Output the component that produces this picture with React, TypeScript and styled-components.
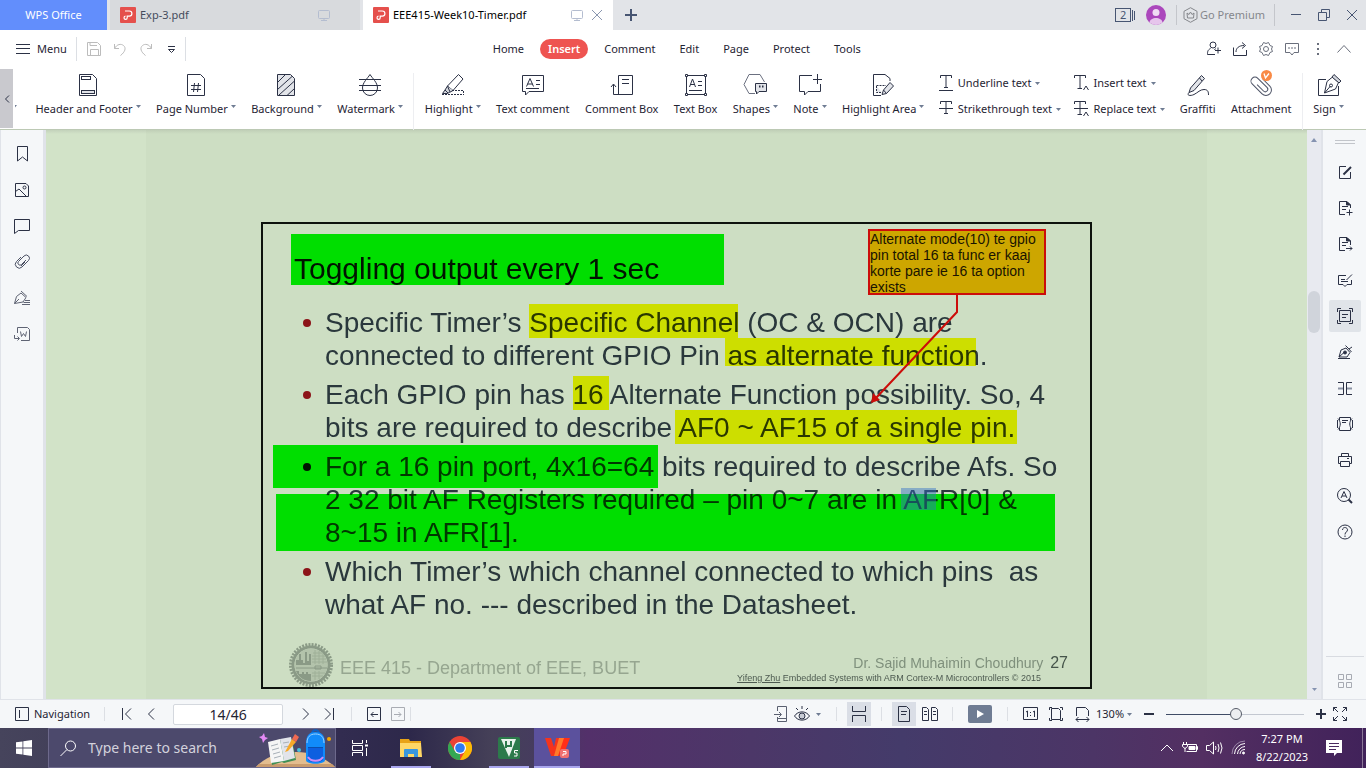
import React from "react";
import styled, { createGlobalStyle } from "styled-components";

const ink = "#2b3145";
const uiFont = `"Noto Sans", "Open Sans", sans-serif`;
const docFont = `"Liberation Sans", Arial, sans-serif`;

const Global = createGlobalStyle`
  *, *::before, *::after { box-sizing: border-box; }
  html, body, #root { height: 100%; }
  body { margin: 0; font: 11px/16px ${uiFont}; color: #1f2433; background: #fff; overflow: hidden; }
  button, input, select { font: inherit; color: inherit; }
  svg { display: block; flex: none; }
`;

const Shell = styled.div`
  display: flex;
  flex-direction: column;
  height: 100vh;
  min-width: 1340px;
`;

const BareButton = styled.button`
  display: flex;
  align-items: center;
  justify-content: center;
  flex: none;
  margin: 0;
  padding: 0;
  border: 0;
  background: none;
`;

const Spacer = styled.div`
  flex: 1;
`;

const Rule = styled.span<{ $h?: number; $m?: string; $c?: string }>`
  flex: none;
  width: 1px;
  height: ${(p) => p.$h ?? 14}px;
  margin: ${(p) => p.$m ?? "0"};
  background: ${(p) => p.$c ?? "#dcdfe4"};
`;

/* ---------- icons ---------- */

type IconProps = {
  w?: number;
  h?: number;
  c?: string;
  sw?: number;
  children: React.ReactNode;
};
const Icon = ({ w = 16, h = 16, c = ink, sw = 1, children }: IconProps) => (
  <svg width={w} height={h} viewBox={`0 0 ${w} ${h}`} fill="none" stroke={c} strokeWidth={sw} aria-hidden="true">
    {children}
  </svg>
);

const Caret = ({ c = "#6f7c93" }: { c?: string }) => (
  <svg width="5" height="3" viewBox="0 0 5 3" aria-hidden="true">
    <path d="M0 0H5L2.500 3Z" fill={c} />
  </svg>
);

const PdfBadge = () => (
  <svg width="16" height="16" viewBox="0 0 16 16" aria-hidden="true">
    <rect width="16" height="16" rx="1" fill="#e5504c" />
    <path d="M5 4H9.300A2.600 2.600 0 0 1 9.300 9.200H7.200V10.800A1.600 1.600 0 1 1 5.500 9.200" fill="none" stroke="#fff" strokeWidth="1.200" />
  </svg>
);

const Monitor = () => (
  <Icon w={12} h={12} c="#b4bdd0">
    <rect x=".5" y="1.500" width="11" height="8" rx="1" />
    <path d="M6 9.500V11.500M3 11.500H9" />
  </Icon>
);

const sheet = "M3.500 1.500H16.500L20.500 5.500V22.500H3.500Z";

const ribbonIcons: Record<string, React.ReactNode> = {
  header: (
    <>
      <path d={sheet} />
      <rect x="5.500" y="3.500" width="9" height="3" />
      <rect x="5.500" y="17.500" width="13" height="3" fill="#e2e4e9" />
    </>
  ),
  number: (
    <>
      <path d={sheet} />
      <path d="M7 12.500H17M7 16.500H17M10.500 10L9.500 19M14.500 10L13.500 19" />
    </>
  ),
  background: (
    <>
      <path d={sheet} fill="#e2e4e9" />
      <path d="M3.500 9.500L11.500 1.500M3.500 16.500L18 3.500M5 22L20.500 8M13 22.500L20.500 15.500" />
    </>
  ),
  watermark: (
    <>
      <path d="M12 1.500C9.500 5.500 4.500 9.500 4.500 15A7.500 7.500 0 0 0 19.500 15C19.500 9.500 14.500 5.500 12 1.500Z" />
      <path d="M1 6.500H23M1 12.500H23M1 17.500H23" />
    </>
  ),
  highlight: (
    <>
      <path d="M17.500 1.500L22 6L12 17.500L6.500 13Z" />
      <path d="M6.500 13L4 17L1.500 20.500H6L8.500 19.500L12 17.500M4 17L7 20M6.500 13L9 19" fill="#d4d7de" />
      <path d="M11 17.500H23M22.500 18V22M1 21.500H23" strokeDasharray="2 1" />
    </>
  ),
  textComment: (
    <>
      <path d="M1.500 2.500H22.500V18.500H8L4.500 22V18.500H1.500Z" />
      <path d="M5.500 13.500L9 5.500L12.500 13.500M6.500 11H11.500M15 7.500H19M15 11.500H19M5 15.500H18" />
    </>
  ),
  commentBox: (
    <>
      <path d="M8.500 21.500V2.500H22.500V21.500H3.500V11.500M1 14L3.500 11L6 14M12 6.500H19M12 10.500H19" />
    </>
  ),
  textBox: (
    <>
      <path d="M2.500 4V20M21.500 4V20M4 2.500H20M4 21.500H20" />
      <path d="M1.500 1.500H3.500V3.500H1.500ZM20.500 1.500H22.500V3.500H20.500ZM1.500 20.500H3.500V22.500H1.500ZM20.500 20.500H22.500V22.500H20.500Z" />
      <path d="M5.500 14L8.500 6L11.500 14M6.500 11.500H10.500M14 8.500H18M14 12.500H18M5 17.500H18" />
    </>
  ),
  shapes: (
    <>
      <path d="M12 20.500H6L1 11.500L6 1.500H17L21.500 9" stroke="#6b7080" />
      <path d="M12.500 10.500H23.500V18.500H16L13.500 21V18.500H12.500Z" fill="#e2e4e9" />
      <path d="M16 13.500H17.500M19 13.500H20.500" strokeWidth="2" />
    </>
  ),
  note: (
    <path d="M14 2.500H1.500V18.500H6.500V22L10 18.500H22.500V11M19.500 1V11M15 6.500H24" />
  ),
  highlightArea: (
    <>
      <path d="M10 22.500H2.500V1.500H14L19 5.500V8" />
      <path d="M5.500 12.500H15M5.500 13V19.500H11" strokeDasharray="2 1" fill="#e2e4e9" />
      <path d="M19 9.500L22.500 13L15.500 20.500L11 21.500L12.500 17ZM12.500 17L15.500 20.500" fill="#e2e4e9" />
    </>
  ),
  graffiti: (
    <>
      <path d="M15.500 2.500L18.500 5.500L8 17.500L3 19.500L4.500 15ZM13.500 5L16 8" fill="#e2e4e9" />
      <path d="M3 19.500C0 23 5 23 8 21.500C12 19.500 14 16.500 18 16.500C22 16.500 22.500 19 22.500 22" />
    </>
  ),
  attachment: (
    <path
      d="M17.500 8V18A5.500 5.500 0 0 1 6.500 18V4A4 4 0 0 1 14.500 4V17A2.500 2.500 0 0 1 9.500 17V8"
      transform="rotate(-45 12 12) translate(0 1)"
      stroke="#4c5265"
    />
  ),
  sign: (
    <>
      <path d="M9 6.500H1.500V22.500H21.500V13" />
      <path d="M15.500 4L21.500 9.500L18.500 16L7.500 20L10 8.500ZM7.500 20L13.500 13" />
      <path d="M17 1.500L24 8L22 10L15 4Z" fill="#d4d7de" />
      <circle cx="14" cy="12.500" r="1.500" />
    </>
  ),
};

/* ---------- title bar ---------- */

const TitleBar = styled.header`
  display: flex;
  align-items: center;
  flex: none;
  height: 30px;
  background: #e2e4e8;
`;
const HomeTab = styled(BareButton)`
  width: 107px;
  height: 30px;
  margin-right: 3px;
  background: #628efc;
  color: #fff;
`;
const DocTab = styled.div<{ $active?: boolean }>`
  display: flex;
  align-items: center;
  width: 250px;
  height: 30px;
  margin-right: ${(p) => (p.$active ? 0 : 3)}px;
  padding: 0 10px;
  gap: 4px;
  background: ${(p) => (p.$active ? "#fff" : "#d8dadd")};
  color: ${(p) => (p.$active ? "#000" : "#444b5c")};
`;
const TabClose = styled(BareButton)`
  margin-left: 8px;
`;
const TabExtra = styled.span<{ $pad: number }>`
  display: flex;
  align-items: center;
  margin-left: auto;
  padding-right: ${(p) => p.$pad}px;
`;
const NewTab = styled(BareButton)`
  width: 36px;
  height: 30px;
`;
const Premium = styled(BareButton)`
  gap: 2px;
  margin-left: 6px;
  color: #85878c;
`;
const WindowButton = styled(BareButton)`
  width: 28px;
  height: 30px;
`;
const TabCount = styled(BareButton)`
  margin-right: 10px;
  color: #475572;
`;
const CountBox = styled.span`
  width: 16px;
  height: 14px;
  margin-right: 1px;
  border: 1px solid #475572;
  line-height: 12px;
  text-align: center;
`;

/* ---------- menu ---------- */

const MenuBar = styled.nav`
  display: flex;
  align-items: center;
  flex: none;
  height: 38px;
  padding: 0 14px 0 16px;
`;
const MenuButton = styled(BareButton)`
  gap: 7px;
  margin-right: 9px;
`;
const QuickTools = styled.div`
  display: flex;
  align-items: center;
  gap: 10px;
  margin: 0 5px 0 9px;
`;
const MenuTabs = styled.div`
  display: flex;
  align-items: center;
  margin-left: 295px;
`;
const MenuTab = styled(BareButton)<{ $active?: boolean }>`
  height: 20px;
  padding: 0 ${(p) => (p.$active ? 8 : 12)}px;
  margin: 0 ${(p) => (p.$active ? 4 : 0)}px;
  border-radius: 10px;
  background: ${(p) => (p.$active ? "#ee5451" : "none")};
  color: ${(p) => (p.$active ? "#fff" : "inherit")};
  font-weight: ${(p) => (p.$active ? 600 : 400)};
`;
const MenuActions = styled.div`
  display: flex;
  align-items: center;
  gap: 10px;
`;

/* ---------- ribbon ---------- */

const Ribbon = styled.section`
  display: flex;
  flex: none;
  height: 62px;
  border-bottom: 1px solid #bcc9b4;
`;
const RibbonScroll = styled(BareButton)`
  width: 13px;
  height: 59px;
  margin-top: 1px;
  background: #c9c9ce;
`;
const RibbonBody = styled.div`
  display: flex;
  align-items: flex-start;
  flex: 1;
  justify-content: space-between;
  padding: 5px 22px 0 2px;
`;
const RibbonClip = styled.span`
  display: flex;
  justify-content: flex-end;
  width: 2px;
  margin: 32px 3px 0 0;
  overflow: hidden;
`;
const RibbonRule = styled(Rule)`
  height: 57px;
  margin: 0 -5px;
  background: #edeef1;
`;
const RibbonItem = styled(BareButton)`
  position: relative;
  flex-direction: column;
  gap: 4px;
`;
const RibbonLabel = styled.span`
  display: flex;
  gap: 3px;
  white-space: nowrap;
  svg { margin-top: 4px; }
`;
const RibbonStack = styled.div`
  display: flex;
  flex-direction: column;
  gap: 10px;
  margin: 0 -1px;
  padding-top: 2px;
`;
const RibbonRow = styled(BareButton)`
  justify-content: flex-start;
  gap: 4px;
  height: 16px;
  white-space: nowrap;
`;
const VipDot = styled.span`
  position: absolute;
  top: -3px;
  left: 50%;
  width: 11px;
  height: 11px;
  border-radius: 50%;
  background: #f98a45;
`;

type Tool = { id: string; label: string; menu?: boolean; vip?: boolean };
const RibbonTool = ({ id, label, menu, vip }: Tool) => (
  <RibbonItem type="button">
    <Icon w={24} h={24}>{ribbonIcons[id]}</Icon>
    {vip && (
      <VipDot>
        <svg width="11" height="11" viewBox="0 0 11 11" fill="none" stroke="#fff" strokeWidth="1.300">
          <path d="M3 3.500L4.500 8L8 3.500" />
        </svg>
      </VipDot>
    )}
    <RibbonLabel>
      {label}
      {menu && <Caret />}
    </RibbonLabel>
  </RibbonItem>
);

const TextMark = ({ strike, caret }: { strike?: boolean; caret?: boolean }) => (
  <Icon w={15} h={16}>
    <path d={caret ? "M.5 3V.5H11.500V3M6 .5V13.500M3.500 13.500H8" : "M1.500 3V.5H12.500V3M7 .5V12.500M5 12.500H9"} />
    {!strike && !caret && <path d="M0 15.500H14" />}
    {strike && <path d="M0 7.500H14" />}
    {caret && <path d="M9.500 15L12 11L14.500 15" />}
  </Icon>
);

/* ---------- workspace ---------- */

const Workspace = styled.main`
  display: flex;
  flex: 1;
  min-height: 0;
`;
const SideRail = styled.aside`
  display: flex;
  flex-direction: column;
  align-items: center;
  flex: none;
  width: 46px;
  padding: 14px 1px 0 0;
  gap: 16px;
  background: #f5f7f9;
  border-left: 1px solid #e0e3e9;
  border-right: 3px solid #e0e3e9;
`;
const RailButton = styled(BareButton)<{ $on?: boolean }>`
  width: 32px;
  height: ${(p) => (p.$on ? 32 : 20)}px;
  margin: ${(p) => (p.$on ? "-6px 0" : "0")};
  border-radius: 2px;
  background: ${(p) => (p.$on ? "#e0e4e9" : "none")};
`;
const RightRail = styled(SideRail)`
  width: 45px;
  padding: 10px 0 8px;
  border-left: 2px solid #e0e3e9;
  border-right: 0;
`;
const Grip = styled.span`
  width: 20px;
  height: 4px;
  margin-bottom: 2px;
  border-top: 1px solid #c2c5ca;
  border-bottom: 1px solid #c2c5ca;
`;
const RailFoot = styled.div`
  display: flex;
  justify-content: center;
  width: 38px;
  margin-top: auto;
  padding-top: 14px;
  border-top: 1px solid #d8dbe1;
`;
const DocView = styled.section`
  flex: 1;
  min-width: 0;
  overflow: hidden;
  padding: 0 100px;
  background: linear-gradient(#c3d2bb, #d2e3c8 4px);
`;
const Sheet = styled.article`
  display: flex;
  flex-direction: column;
  align-items: center;
  min-height: 100%;
  padding-top: 92px;
  background: linear-gradient(#c0cfb7, #cddec3 4px);
`;
const ScrollTrack = styled.div`
  display: flex;
  flex-direction: column;
  align-items: center;
  flex: none;
  width: 14px;
  padding: 8px 0;
  background: #e8eaf0;
`;
const ScrollThumb = styled.span`
  width: 12px;
  height: 42px;
  margin-top: 149px;
  border-radius: 6px;
  background: #d0d4db;
`;

/* ---------- slide ---------- */

const Slide = styled.div`
  position: relative;
  isolation: isolate;
  width: 831px;
  padding: 28px 22px 0 31px;
  border: 2px solid #0d120d;
  background: #cddec3;
  font-family: ${docFont};
  color: #2a383c;
`;
const SlideTitle = styled.h1`
  margin: 0 0 20px;
  font-size: 30px;
  line-height: 34px;
  font-weight: 400;
  color: #8c1418;
`;
const Bullets = styled.ul`
  display: flex;
  flex-direction: column;
  gap: 6px;
  margin: 0;
  padding: 0 0 0 31px;
  list-style: none;
  font-size: 28px;
  line-height: 33px;
  white-space: pre;
`;
const Bullet = styled.li`
  position: relative;
  &::before {
    content: "";
    position: absolute;
    left: -22px;
    top: 13px;
    width: 8px;
    height: 8px;
    border-radius: 50%;
    background: #8c1418;
  }
`;
const SlideFoot = styled.footer`
  display: flex;
  align-items: center;
  margin: 22px 0 0 -5px;
  color: #96a690;
  font-size: 18px;
  line-height: 22px;
  gap: 7px;
`;
const Course = styled.span`
  padding-top: 6px;
`;
const Credits = styled.div`
  display: flex;
  flex-direction: column;
  align-items: flex-end;
  margin-left: auto;
  padding-top: 8px;
  font-size: 14px;
  line-height: 18px;
  color: #7f907c;
`;
const Author = styled.span`
  display: flex;
  gap: 7px;
`;
const PageNo = styled.span`
  font-size: 16px;
  color: #45544a;
`;
const Source = styled.small`
  padding-right: 27px;
  font-size: 9px;
  line-height: 13px;
  color: #4d5a50;
`;
const Highlight = styled.span<{ $x: number; $y: number; $w: number; $h: number; $c: string }>`
  position: absolute;
  left: ${(p) => p.$x}px;
  top: ${(p) => p.$y}px;
  width: ${(p) => p.$w}px;
  height: ${(p) => p.$h}px;
  background: ${(p) => p.$c};
  mix-blend-mode: multiply;
`;
const Selection = styled(Highlight)`
  mix-blend-mode: normal;
`;
const Callout = styled.div`
  position: absolute;
  top: 5px;
  left: 605px;
  width: 178px;
  height: 66px;
  border: 2px solid #cc0d0a;
  background: #cda600;
  color: #1a1400;
  font-size: 14px;
  line-height: 16px;
  white-space: pre;
`;
const Leader = styled.svg`
  position: absolute;
  left: 600px;
  top: 70px;
`;

const green = "#00ff00";
const yellow = "#ffff00";
const marks = [
  { $x: 28, $y: 10, $w: 433, $h: 51, $c: green },
  { $x: 10, $y: 221, $w: 385, $h: 43, $c: green },
  { $x: 13, $y: 270, $w: 779, $h: 57, $c: green },
  { $x: 266, $y: 80, $w: 209, $h: 34, $c: yellow },
  { $x: 462, $y: 114, $w: 251, $h: 28, $c: yellow },
  { $x: 310, $y: 152, $w: 36, $h: 34, $c: yellow },
  { $x: 412, $y: 186, $w: 342, $h: 34, $c: yellow },
];

const bullets = [
  "Specific Timer’s Specific Channel (OC & OCN) are\nconnected to different GPIO Pin as alternate function.",
  "Each GPIO pin has 16 Alternate Function possibility. So, 4\nbits are required to describe AF0 ~ AF15 of a single pin.",
  "For a 16 pin port, 4x16=64 bits required to describe Afs. So\n2 32 bit AF Registers required – pin 0~7 are in AFR[0] &\n8~15 in AFR[1].",
  "Which Timer’s which channel connected to which pins  as\nwhat AF no. --- described in the Datasheet.",
];

const Seal = () => (
  <svg width="44" height="44" viewBox="0 0 44 44" fill="none" aria-hidden="true">
    <circle cx="22" cy="22" r="20.500" stroke="#8a9a86" strokeWidth="3" strokeDasharray="2 1.220" />
    <circle cx="22" cy="22" r="18" stroke="#8a9a86" strokeWidth="3" />
    <circle cx="22" cy="22" r="16.500" fill="#b3c3ab" />
    <path d="M7 21V17H10V11H12V17H14V20H16V9H18V18H20V11H22V22H7Z" fill="#8a9a86" />
    <path d="M7 28H10V31H13V29H15V31H17V29H19V31H22V38C15 38 9 34 7 28Z" fill="#8a9a86" />
    <path d="M24 10H34M23 13H36M23 16H37M23 19H38M23 30H36M23 33H34M26 7V21M30 8V21M34 11V21M26 28V37M30 28V36" stroke="#9fb098" />
    <path d="M7 25H38M26 23H32V26H26Z" stroke="#8a9a86" />
  </svg>
);

/* ---------- status bar ---------- */

const StatusBar = styled.footer`
  display: flex;
  align-items: center;
  flex: none;
  height: 29px;
  padding: 0 14px 0 15px;
  background: #f5f7f9;
  border-top: 1px solid #e0e3e9;
`;
const NavToggle = styled(BareButton)`
  gap: 5px;
`;
const PageInput = styled.input`
  width: 110px;
  height: 21px;
  margin: 0 18px 0 10px;
  padding: 0;
  border: 1px solid #d4d8de;
  border-radius: 2px;
  background: #fff;
  font-size: 14px;
  text-align: center;
`;
const StatusButton = styled(BareButton)<{ $on?: boolean; $w?: number }>`
  width: ${(p) => p.$w ?? 24}px;
  height: 24px;
  background: ${(p) => (p.$on ? "#dadee6" : "none")};
`;
const PlayButton = styled(BareButton)`
  width: 24px;
  height: 18px;
  border-radius: 2px;
  background: #6f7c93;
`;
const ZoomSelect = styled.select`
  width: 31px;
  margin: 0 0 0 2px;
  padding: 0;
  border: 0;
  background: none;
  appearance: none;
`;
const ZoomRange = styled.input`
  width: 138px;
  height: 14px;
  margin: 0 10px 0 0;
  appearance: none;
  background: none;
  &::-webkit-slider-runnable-track {
    height: 1px;
    background: linear-gradient(90deg, #3f4c66 51%, #c3c8d1 51%);
  }
  &::-webkit-slider-thumb {
    appearance: none;
    width: 12px;
    height: 12px;
    margin-top: -6px;
    border: 1px solid #555b68;
    border-radius: 50%;
    background: #eceef1;
  }
`;

/* ---------- taskbar ---------- */

const Taskbar = styled.footer`
  display: flex;
  align-items: center;
  flex: none;
  height: 40px;
  background: linear-gradient(90deg, #46445c 0, #322c50 25%, #2d284a 30%, #454058 36%, #463b60 40%, #53306a 43%, #4c3768 55%, #443b6a 66%, #4c3566 80%, #532f62 88%, #41225a 100%);
  color: #fff;
`;
const TaskButton = styled(BareButton)<{ $w?: number; $gap?: number; $state?: "open" | "active" }>`
  width: ${(p) => p.$w ?? 40}px;
  height: 40px;
  margin-right: ${(p) => p.$gap ?? 0}px;
  background: ${(p) => (p.$state === "active" ? "#5b519d" : "none")};
  border-bottom: ${(p) => (p.$state ? "2px solid #a9a6ee" : "0")};
  padding-top: ${(p) => (p.$state ? 2 : 0)}px;
`;
const SearchBox = styled.label`
  display: flex;
  align-items: center;
  flex: none;
  width: 288px;
  height: 40px;
  padding-left: 11px;
  gap: 11px;
  border: 1px solid #6d698c;
  background: #4c496c;
`;
const SearchInput = styled.input`
  flex: 1;
  min-width: 0;
  padding: 0;
  border: 0;
  background: none;
  font-size: 14px;
  &::placeholder { color: #d3d2dc; }
`;
const Tray = styled.div`
  display: flex;
  align-items: center;
  gap: 8px;
  padding-right: 3px;
`;
const Clock = styled.time`
  width: 54px;
  margin-right: 9px;
  line-height: 18px;
  text-align: center;
`;
const Corner = styled.span`
  width: 1px;
  height: 40px;
  margin-left: 12px;
  background: #8a7796;
`;

const SearchArt = () => (
  <svg width="79" height="38" viewBox="0 0 79 38" aria-hidden="true">
    <path d="M0 38C10 27 24 23 40 23S68 28 79 38Z" fill="#e3bd8e" />
    <path d="M0 38L3 35H76L79 38Z" fill="#c99b6c" />
    <path d="M13 15L24 12L27 13L36 10L40 31L28 34L26 33L16 36Z" fill="#3f8f55" />
    <path d="M12 13L24 10L28 32L15 34Z" fill="#f5f5f5" />
    <path d="M24 10L35 8L39 29L28 32Z" fill="#e2e4ea" />
    <path d="M15 17L22 15M16 21L23 19M17 25L24 23M18 29L25 27M27 14L33 13M28 18L34 17" stroke="#a8b0b8" fill="none" />
    <path d="M29 23L36 10L40 13L32 22Z" fill="#f7a928" />
    <path d="M36 10L39 5L43 8L40 13Z" fill="#ef6a52" />
    <path d="M8 4L9 8L12 9L9 11L7 14L6 10L3 8L6 7Z" fill="#e48af5" />
    <circle cx="43" cy="21" r="2" fill="#43c4e0" />
    <circle cx="73" cy="10" r="2" fill="#f5a800" />
    <path d="M56 5C56 0 63 0 63 5" stroke="#0b5fc4" fill="none" strokeWidth="2" />
    <path d="M50 14C50 6 54 3 59.500 3S69 6 69 14V31C69 36 50 36 50 31Z" fill="#118bfa" />
    <path d="M51 14C51 8 54 5 59.500 5S68 8 68 14" stroke="#9ad3ff" fill="none" strokeWidth="1" />
    <path d="M52 19H67V31C65 34 54 34 52 31Z" fill="#0d5fe0" />
    <path d="M52 28C55 33 64 33 67 28" stroke="#d08cf5" fill="none" strokeWidth="2" />
    <path d="M52 18.500H67" stroke="#0a4fb0" />
  </svg>
);

export default function App() {
  const ribbonA: Tool[] = [
    { id: "header", label: "Header and Footer", menu: true },
    { id: "number", label: "Page Number", menu: true },
    { id: "background", label: "Background", menu: true },
    { id: "watermark", label: "Watermark", menu: true },
  ];
  const ribbonB: Tool[] = [
    { id: "highlight", label: "Highlight", menu: true },
    { id: "textComment", label: "Text comment" },
    { id: "commentBox", label: "Comment Box" },
    { id: "textBox", label: "Text Box" },
    { id: "shapes", label: "Shapes", menu: true },
    { id: "note", label: "Note", menu: true },
    { id: "highlightArea", label: "Highlight Area", menu: true },
  ];

  return (
    <Shell>
      <Global />
      <TitleBar>
        <HomeTab type="button">WPS Office</HomeTab>
        <DocTab>
          <PdfBadge />
          Exp-3.pdf
          <TabExtra $pad={20}>
            <Monitor />
          </TabExtra>
        </DocTab>
        <DocTab $active>
          <PdfBadge />
          EEE415-Week10-Timer.pdf
          <TabExtra $pad={0}>
            <Monitor />
            <TabClose type="button" aria-label="Close tab">
              <Icon w={12} h={12} c="#8a97b0">
                <path d="M1 1L11 11M11 1L1 11" />
              </Icon>
            </TabClose>
          </TabExtra>
        </DocTab>
        <NewTab type="button" aria-label="New tab">
          <Icon w={12} h={12} c="#475572" sw={2}>
            <path d="M6 0V12M0 6H12" />
          </Icon>
        </NewTab>
        <Spacer />
        <TabCount type="button">
          <CountBox>2</CountBox>
          <Icon w={4} h={14} c="#475572">
            <path d="M.5 2V13M2.500 3V12" />
          </Icon>
        </TabCount>
        <BareButton type="button" aria-label="Account">
          <svg width="20" height="20" viewBox="0 0 20 20">
            <circle cx="10" cy="10" r="10" fill="#ab47bc" />
            <circle cx="10" cy="7.500" r="3.500" fill="#f0dcf4" />
            <path d="M3.500 17.500C4 11.500 16 11.500 16.500 17.500A10 10 0 0 1 3.500 17.500Z" fill="#e6c5ec" />
          </svg>
        </BareButton>
        <Rule $h={20} $m="0 0 0 10px" $c="#c4c6cb" />
        <Premium type="button">
          <Icon w={15} h={16} c="#85878c">
            <path d="M7.500 .7L14 4.300V11.700L7.500 15.300L1 11.700V4.300Z" />
            <path d="M4 6L6 7.500L7.500 5L9 7.500L11 6L10.500 11H4.500Z" />
          </Icon>
          Go Premium
        </Premium>
        <Rule $h={22} $m="0 7px 0 9px" $c="#c4c6cb" />
        <WindowButton type="button" aria-label="Minimize">
          <Icon w={12} h={12} c="#475572"><path d="M1 5.500H11" /></Icon>
        </WindowButton>
        <WindowButton type="button" aria-label="Restore">
          <Icon w={12} h={12} c="#475572"><path d="M.5 3.500H8.500V11.500H.5ZM3.500 3V.5H11.500V8.500H9" /></Icon>
        </WindowButton>
        <WindowButton type="button" aria-label="Close">
          <Icon w={12} h={12} c="#475572"><path d="M1 1L11 11M11 1L1 11" /></Icon>
        </WindowButton>
      </TitleBar>

      <MenuBar>
        <MenuButton type="button">
          <Icon w={14} h={10}><path d="M0 .5H14M0 4.500H14M0 9.500H14" /></Icon>
          Menu
        </MenuButton>
        <Rule $h={24} />
        <QuickTools>
          <BareButton type="button" aria-label="Save">
            <Icon c="#bcbcbc"><path d="M1.500 1.500H11.500L14.500 4.500V14.500H1.500ZM4 1.500V4.500H11M4.500 14V8.500H12.500V14" /></Icon>
          </BareButton>
          <BareButton type="button" aria-label="Undo">
            <Icon c="#bcbcbc"><path d="M2.500 3V7.500H7M2.500 7.500C5 3 9 2.500 11.500 4.500C14.500 7 13 11 8.500 14.500" /></Icon>
          </BareButton>
          <BareButton type="button" aria-label="Redo">
            <Icon c="#bcbcbc"><path d="M13.500 3V7.500H9M13.500 7.500C11 3 7 2.500 4.500 4.500C1.500 7 3 11 7.500 14.500" /></Icon>
          </BareButton>
          <BareButton type="button" aria-label="Customize quick access">
            <Icon><path d="M4 5.500H11M4.500 8.500H10.500L7.500 11.500Z" /></Icon>
          </BareButton>
        </QuickTools>
        <Rule $h={24} />
        <MenuTabs>
          {["Home", "Insert", "Comment", "Edit", "Page", "Protect", "Tools"].map((t) => (
            <MenuTab type="button" key={t} $active={t === "Insert"}>{t}</MenuTab>
          ))}
        </MenuTabs>
        <Spacer />
        <MenuActions>
          <BareButton type="button" aria-label="Share with">
            <Icon><circle cx="7" cy="4" r="3" /><path d="M4.500 7.500C1.500 9 1.500 11 1.500 13.500H9M9.500 7.500L8.500 9M12 6.500V12.500M9 9.500H15" /></Icon>
          </BareButton>
          <BareButton type="button" aria-label="Export">
            <Icon><path d="M1.500 6.500V14.500H14.500V9M4 11C4 7 7 4.500 12 4.500M10 1.500L13.500 4.500L10 7.500" /></Icon>
          </BareButton>
          <BareButton type="button" aria-label="Settings">
            <Icon c="#6a6f7c"><path d="M5.500 1.500L8 2.500L10.500 1.500L12 4.500L14.500 5.500L13.500 8L14.500 10.500L12 11.500L10.500 14.500L8 13.500L5.500 14.500L4 11.500L1.500 10.500L2.500 8L1.500 5.500L4 4.500Z" /><circle cx="8" cy="8" r="2.500" /></Icon>
          </BareButton>
          <BareButton type="button" aria-label="Feedback">
            <Icon c="#6a6f7c"><path d="M1.500 2.500H14.500V11.500H10L8 14L6 11.500H1.500ZM4 7H6M7 7H9M10 7H12" /></Icon>
          </BareButton>
          <BareButton type="button" aria-label="More">
            <Icon c="#6a6f7c" sw={2}><path d="M8 2V4M8 7V9M8 12V14" /></Icon>
          </BareButton>
          <BareButton type="button" aria-label="Collapse ribbon">
            <Icon c="#6a6f7c"><path d="M1.500 11.500L8 4.500L14.500 11.500" /></Icon>
          </BareButton>
        </MenuActions>
      </MenuBar>

      <Ribbon>
        <RibbonScroll type="button" aria-label="Scroll left">
          <Icon w={6} h={8}><path d="M5 .5L1.500 4L5 7.500" /></Icon>
        </RibbonScroll>
        <RibbonBody>
          <RibbonClip><Caret /></RibbonClip>
          {ribbonA.map((t) => <RibbonTool key={t.id} {...t} />)}
          <RibbonRule />
          {ribbonB.map((t) => <RibbonTool key={t.id} {...t} />)}
          <RibbonStack>
            <RibbonRow type="button"><TextMark />Underline text <Caret /></RibbonRow>
            <RibbonRow type="button"><TextMark strike />Strikethrough text <Caret /></RibbonRow>
          </RibbonStack>
          <RibbonStack>
            <RibbonRow type="button"><TextMark caret />Insert text <Caret /></RibbonRow>
            <RibbonRow type="button"><TextMark caret strike />Replace text <Caret /></RibbonRow>
          </RibbonStack>
          <RibbonTool id="graffiti" label="Graffiti" />
          <RibbonTool id="attachment" label="Attachment" vip />
          <RibbonRule />
          <RibbonTool id="sign" label="Sign" menu />
        </RibbonBody>
      </Ribbon>

      <Workspace>
        <SideRail>
          <RailButton type="button" aria-label="Bookmarks"><Icon><path d="M3.500 .5H13.500V15L8.500 11L3.500 15Z" /></Icon></RailButton>
          <RailButton type="button" aria-label="Thumbnails"><Icon><path d="M1.500 1.500H12L14.500 4V14.500H1.500ZM1.500 9.500L5 7L12 14" /><circle cx="10.500" cy="5.500" r="1.500" /></Icon></RailButton>
          <RailButton type="button" aria-label="Comments"><Icon><path d="M.5 1.500H15.500V12.500H4.500L.5 15.500Z" /></Icon></RailButton>
          <RailButton type="button" aria-label="Attachments">
            <Icon c="#4c5265"><path d="M7 3L2.500 7.500A3.800 3.800 0 0 0 8 13L14.500 6.500A3 3 0 0 0 10 2L4.500 7.500A2 2 0 0 0 7.500 10.500L12 6M7 12L11 8" /></Icon>
          </RailButton>
          <RailButton type="button" aria-label="Signatures">
            <Icon c="#5f6474"><path d="M.5 13.500L2.500 6.500L7 3L12 7.500L9 12L.5 13.500ZM7 1L13 6.500M.5 13.500L5 9M11 10.500H16M9.500 12.500H16M8 14.500H16" /></Icon>
          </RailButton>
          <RailButton type="button" aria-label="Convert to Word">
            <Icon c="#5f6474"><path d="M3.500 7V1.500H13.500L15.500 3.500V14.500H7M6.500 5.500L7.500 10.500L9.500 7.500L11.500 10.500L12.500 5.500M.5 9V12.500H5M3.500 10.500L5.500 12.500L3.500 14.500" /></Icon>
          </RailButton>
        </SideRail>

        <DocView>
          <Sheet>
            <Slide>
              <SlideTitle>Toggling output every 1 sec</SlideTitle>
              <Bullets>
                {bullets.map((b) => <Bullet key={b}>{b}</Bullet>)}
              </Bullets>
              <SlideFoot>
                <Seal />
                <Course>EEE 415 - Department of EEE, BUET</Course>
                <Credits>
                  <Author>Dr. Sajid Muhaimin Choudhury <PageNo>27</PageNo></Author>
                  <Source><u>Yifeng Zhu</u> Embedded Systems with ARM Cortex-M Microcontrollers © 2015</Source>
                </Credits>
              </SlideFoot>
              {marks.map((m, i) => <Highlight key={i} {...m} />)}
              <Selection $x={638} $y={264} $w={35} $h={22} $c="rgba(50, 110, 200, 0.45)" />
              <Callout>{"Alternate mode(10) te gpio\npin total 16 ta func er kaaj\nkorte pare ie 16 ta option\nexists"}</Callout>
              <Leader width="100" height="112" viewBox="0 0 100 112" fill="none" aria-hidden="true">
                <path d="M94 0V18L12 105" stroke="#cc0d0a" strokeWidth="2" />
                <path d="M8 109L10 99L17 106Z" fill="#cc0d0a" />
              </Leader>
            </Slide>
          </Sheet>
        </DocView>

        <ScrollTrack>
          <svg width="6" height="4" viewBox="0 0 6 4"><path d="M0 4H6L3 0Z" fill="#8593b0" /></svg>
          <ScrollThumb />
          <Spacer />
          <Caret c="#8593b0" />
        </ScrollTrack>

        <RightRail>
          <Grip />
          <RailButton type="button" aria-label="Edit"><Icon><path d="M9 2.500H2.500V14.500H13.500V8" /><path d="M6.500 10.500L14 3" strokeWidth="2" /></Icon></RailButton>
          <RailButton type="button" aria-label="Add page"><Icon><path d="M8 14.500H2.500V1.500H10L13.500 5V8M5 6.500H11M5 9.500H9M12.500 9.500V15.500M9.500 12.500H15.500" /><path d="M9.500 1.500V5H13.500Z" fill={ink} /></Icon></RailButton>
          <RailButton type="button" aria-label="Export page"><Icon><path d="M8 14.500H2.500V1.500H10L13.500 5V9M5 6.500H11M5 9.500H9M9 12.500H15M13 10.500L15 12.500L13 14.500" /><path d="M9.500 1.500V5H13.500Z" fill={ink} /></Icon></RailButton>
          <RailButton type="button" aria-label="Annotate"><Icon><path d="M9 3.500H1.500V12.500H6L8 14.500L10 12.500H14.500V8M4 7.500H8M4 9.500H11M9.500 8L15 2.500" /></Icon></RailButton>
          <RailButton type="button" aria-label="Page view" $on><Icon><path d="M2.500 2.500H13.500V13.500H2.500ZM5 6.500H11M5 9.500H9M.5 4V.5H4M12 .5H15.500V4M15.500 12V15.500H12M4 15.500H.5V12" /></Icon></RailButton>
          <RailButton type="button" aria-label="Sign"><Icon><path d="M2 13L4 6L9 4L13 8.500L10 13ZM2 13L7 8.500M8.500 1.500L11 4M11 4L14.500 8M12 5L15 3M1 14.500H13" /><circle cx="8" cy="8.500" r="1.500" fill={ink} /></Icon></RailButton>
          <RailButton type="button" aria-label="Compare"><Icon><path d="M1 2.500H6.500V14.500H1M15 2.500H9.500V14.500H15" /><path d="M1 8.500H6M10 8.500H15" stroke="#8a92a3" strokeWidth="2" /></Icon></RailButton>
          <RailButton type="button" aria-label="Translate"><Icon><path d="M2.500 4V1.500H13.500V4M2.500 12V14.500H13.500V12M5 4.500H11M5 6.500H9" /><path d="M1 2.500C4 6 4 10 1 13.500M.5 4V12M15 2.500C12 6 12 10 15 13.500M15.500 4V12" /></Icon></RailButton>
          <RailButton type="button" aria-label="Print"><Icon><path d="M4.500 4.500V1.500H11.500V4.500M3.500 11.500H1.500V4.500H14.500V11.500H12.500M3.500 9.500H12.500V14.500H3.500ZM10 6.500H12" /></Icon></RailButton>
          <RailButton type="button" aria-label="Find"><Icon><circle cx="7" cy="7" r="6.500" /><path d="M4 10L7 3.500L10 10M5 8H9" /><path d="M11.500 11.500L15 15" strokeWidth="2" /></Icon></RailButton>
          <RailButton type="button" aria-label="Help"><Icon><circle cx="8" cy="8" r="7" /><path d="M5.500 6C5.500 2.500 10.500 3 10.500 5.800C10.500 8 8 8 8 10.500M8 11.500V13" /></Icon></RailButton>
          <RailFoot>
            <RailButton type="button" aria-label="All tools"><Icon c="#a7aab2"><path d="M1.500 1.500H6.500V6.500H1.500ZM9.500 1.500H14.500V6.500H9.500ZM1.500 9.500H6.500V14.500H1.500ZM9.500 9.500H14.500V14.500H9.500Z" /></Icon></RailButton>
          </RailFoot>
        </RightRail>
      </Workspace>

      <StatusBar>
        <NavToggle type="button">
          <Icon w={14} h={14}><path d="M.5 .5H13.500V13.500H.5ZM4.500 3V11" /></Icon>
          Navigation
        </NavToggle>
        <Rule $m="0 10px 0 14px" />
        <StatusButton type="button" aria-label="First page"><Icon w={10} h={14}><path d="M.5 1V13M9 1.500L3.500 7L9 12.500" /></Icon></StatusButton>
        <StatusButton type="button" aria-label="Previous page"><Icon w={8} h={14}><path d="M7 1.500L1.500 7L7 12.500" /></Icon></StatusButton>
        <PageInput aria-label="Page" defaultValue="14/46" />
        <StatusButton type="button" aria-label="Next page" $w={10}><Icon w={8} h={14}><path d="M1 1.500L6.500 7L1 12.500" /></Icon></StatusButton>
        <StatusButton type="button" aria-label="Last page" $w={36}><Icon w={10} h={14}><path d="M9.500 1V13M1 1.500L6.500 7L1 12.500" /></Icon></StatusButton>
        <Rule $m="0 10px 0 4px" />
        <StatusButton type="button" aria-label="Back"><Icon w={14} h={14}><path d="M.5 .5H13.500V13.500H.5ZM4 7.500H11M6.500 5L4 7.500L6.500 10" /></Icon></StatusButton>
        <StatusButton type="button" aria-label="Forward"><Icon w={14} h={14} c="#a9acb3"><path d="M.5 .5H13.500V13.500H.5ZM3 7.500H10M7.500 5L10 7.500L7.500 10" /></Icon></StatusButton>
        <Rule />
        <Spacer />
        <StatusButton type="button" aria-label="Send to phone"><Icon w={15} h={16} c="#5a6070"><path d="M4.500 5V.5H13.500V15.500H4.500V11M1 8.500H8M6 6L8.500 8.500L6 11M4.500 12.500H13.500" /></Icon></StatusButton>
        <StatusButton type="button" aria-label="Eye protection" $w={20}>
          <Icon><path d="M.5 10C4 4.500 12 4.500 15.500 10C12 15.500 4 15.500 .5 10ZM8 0V3M2 2L4 4M14 2L12 4" /><circle cx="8" cy="10" r="3" fill="#c9cdd6" /></Icon>
        </StatusButton>
        <StatusButton type="button" aria-label="Eye protection options" $w={12}><Caret /></StatusButton>
        <Rule $m="0 10px 0 12px" />
        <StatusButton type="button" aria-label="Continuous scroll" $on><Icon w={14} h={16}><path d="M.5 0V5.500H13.500V0M.5 16V9.500H13.500V16" /></Icon></StatusButton>
        <Rule $m="0 10px" />
        <StatusButton type="button" aria-label="Single page" $on><Icon w={14} h={16}><path d="M1.500 .5H9.500L12.500 3.500V15.500H1.500ZM4 5.500H10M4 8.500H9" /></Icon></StatusButton>
        <StatusButton type="button" aria-label="Two pages" $w={28}><Icon><path d="M.5 1.500H4.500L6.500 3.500V14.500H.5ZM9.500 1.500H13.500L15.500 3.500V14.500H9.500ZM2 5.500H5M2 8.500H5M11 5.500H14M11 8.500H14" /></Icon></StatusButton>
        <Rule $m="0 15px 0 8px" />
        <PlayButton type="button" aria-label="Play"><svg width="7" height="8" viewBox="0 0 7 8"><path d="M0 0L7 4L0 8Z" fill="#fff" /></svg></PlayButton>
        <Rule $m="0 10px 0 15px" />
        <StatusButton type="button" aria-label="Actual size"><Icon w={15} h={14}><path d="M.5 .5H14.500V12.500H.5ZM3 5L4.500 4V10M10 5L11.500 4V10M7.500 5V6M7.500 8V9" /></Icon></StatusButton>
        <StatusButton type="button" aria-label="Fit page" $w={28}><Icon w={14} h={14}><path d="M2.500 1.500H9.500L11.500 3.500V12.500H2.500ZM.5 3V.5H3M11 .5H13.500V3M13.500 11V13.500H11M3 13.500H.5V11" /></Icon></StatusButton>
        <StatusButton type="button" aria-label="Fit width"><Icon w={15} h={15}><path d="M1.500 9V.5H10.500L13.500 3.500V9M1 12.500H14M3.500 10L1 12.500L3.500 15M11.500 10L14 12.500L11.500 15" /></Icon></StatusButton>
        <ZoomSelect aria-label="Zoom" defaultValue="130%"><option>130%</option></ZoomSelect>
        <Caret />
        <StatusButton type="button" aria-label="Zoom out" $w={34}><Icon w={10} h={10} sw={2}><path d="M0 5H10" /></Icon></StatusButton>
        <ZoomRange type="range" aria-label="Zoom level" min={0} max={100} defaultValue={51} />
        <StatusButton type="button" aria-label="Zoom in" $w={14}><Icon w={10} h={10} sw={2}><path d="M0 5H10M5 0V10" /></Icon></StatusButton>
        <StatusButton type="button" aria-label="Full screen" $w={24}><Icon w={14} h={14}><path d="M.5 4V.5H4M.5 .5L5 5M10 .5H13.500V4M13.500 .5L9 5M13.500 10V13.500H10M13.500 13.500L9 9M4 13.500H.5V10M.5 13.500L5 9" /></Icon></StatusButton>
      </StatusBar>

      <Taskbar>
        <TaskButton type="button" aria-label="Start" $w={48}>
          <svg width="16" height="16" viewBox="0 0 16 16"><path d="M0 2.300L6.500 1.400V7.600H0ZM7.300 1.300L16 0V7.600H7.300ZM0 8.400H6.500V14.600L0 13.700ZM7.300 8.400H16V16L7.300 14.700Z" fill="#fff" /></svg>
        </TaskButton>
        <SearchBox>
          <Icon w={17} h={17} c="#fff"><circle cx="10.500" cy="6" r="5" /><path d="M7 9.500L.5 16" /></Icon>
          <SearchInput type="text" placeholder="Type here to search" />
          <SearchArt />
        </SearchBox>
        <TaskButton type="button" aria-label="Task view" $w={48} $gap={7}>
          <Icon c="#fff"><path d="M.5 0V3.500H10.500V0M.5 5.500H10.500V10.500H.5ZM.5 16V12.500H10.500V16M14.500 0V3M14.500 8V16" /><path d="M13 5.500H16" strokeWidth="2" /></Icon>
        </TaskButton>
        <TaskButton type="button" aria-label="File Explorer" $state="open">
          <svg width="22" height="18" viewBox="0 0 22 18"><path d="M0 0H9L10 2H21V18H0Z" fill="#e8a317" /><path d="M0 4H21L22 18H0Z" fill="#ffd766" /><path d="M4 18V11Q4 10 5 10H17Q18 10 18 11V18H14V15H8V18Z" fill="#3a96dd" /></svg>
        </TaskButton>
        <TaskButton type="button" aria-label="Chrome" $w={58}>
          <svg width="24" height="24" viewBox="0 0 24 24">
            <circle cx="12" cy="12" r="12" fill="#ea4335" />
            <path d="M1.600 6L6.800 15L12 18V24A12 12 0 0 1 1.600 6Z" fill="#34a853" />
            <path d="M12 6H22.400A12 12 0 0 1 12 24L17.200 15Z" fill="#fbbc05" />
            <circle cx="12" cy="12" r="6" fill="#fff" />
            <circle cx="12" cy="12" r="4.800" fill="#2f7bf0" />
          </svg>
        </TaskButton>
        <TaskButton type="button" aria-label="uVision" $state="open" $gap={5}>
          <svg width="22" height="22" viewBox="0 0 22 22">
            <rect width="22" height="22" rx="2" fill="#2c7a4b" />
            <path d="M3 2H18L11 20Z" fill="#e9f3ec" />
            <path d="M8 4V11M8 9H13M13 4V10" stroke="#2c7a4b" strokeWidth="2" />
            <path d="M20 13.500H16.500V16H19V19H16" stroke="#fff" fill="none" />
          </svg>
        </TaskButton>
        <TaskButton type="button" aria-label="WPS Office" $state="active" $w={46}>
          <svg width="25" height="22" viewBox="0 0 25 22">
            <path d="M0 1H6L9 10L11 1H16L10 19H6Z" fill="#f5341c" />
            <path d="M12 19L17 5L15 1H25L20 14L14 19Z" fill="#ff2f18" />
            <path d="M9 19L14 1H19L13 19Z" fill="#ff7a2a" />
            <rect x="15" y="12" width="9" height="9" rx="2" fill="#f07070" />
            <path d="M18 14.500H21V17H18V19" stroke="#fff" fill="none" />
          </svg>
        </TaskButton>
        <Spacer />
        <Tray>
          <Icon w={14} h={16} c="#fff"><path d="M1 11L7 5L13 11" /></Icon>
          <Icon w={16} h={16} c="#fff"><path d="M5.500 4.500H14.500V11.500H4.500M14.500 6.500H15.500V9.500H14.500M1.500 2V4M4.500 2V4M.5 4.500H5.500V6.500L3 8.500L.5 6.500ZM3 8V12" /><path d="M7 6.500H13V9.500H7Z" fill="#fff" /></Icon>
          <Icon w={17} h={16} c="#fff"><path d="M.5 5.500H3.500L7.500 2V14L3.500 10.500H.5ZM9.500 6Q10.500 8 9.500 10M12 4Q14 8 12 12M14.500 2.500Q17.500 8 14.500 13.500" /></Icon>
          <Icon w={16} h={16} c="#fff"><path d="M3.500 14A11 11 0 0 1 14 3.500M6.500 14A8 8 0 0 1 14 6.500M9 14A5 5 0 0 1 14 9.500" /><circle cx="12.500" cy="13" r="1" fill="#fff" /><path d="M1 14A13 13 0 0 1 14 1" stroke="#9a86a8" /></Icon>
          <Clock>7:27 PM<br />8/22/2023</Clock>
          <svg width="16" height="16" viewBox="0 0 16 16"><path d="M0 0H16V13H11L8 16V13H0Z" fill="#fff" /><path d="M3 3.500H13M3 6.500H13M3 9.500H10" stroke="#4a2a60" /></svg>
          <Corner />
        </Tray>
      </Taskbar>
    </Shell>
  );
}
